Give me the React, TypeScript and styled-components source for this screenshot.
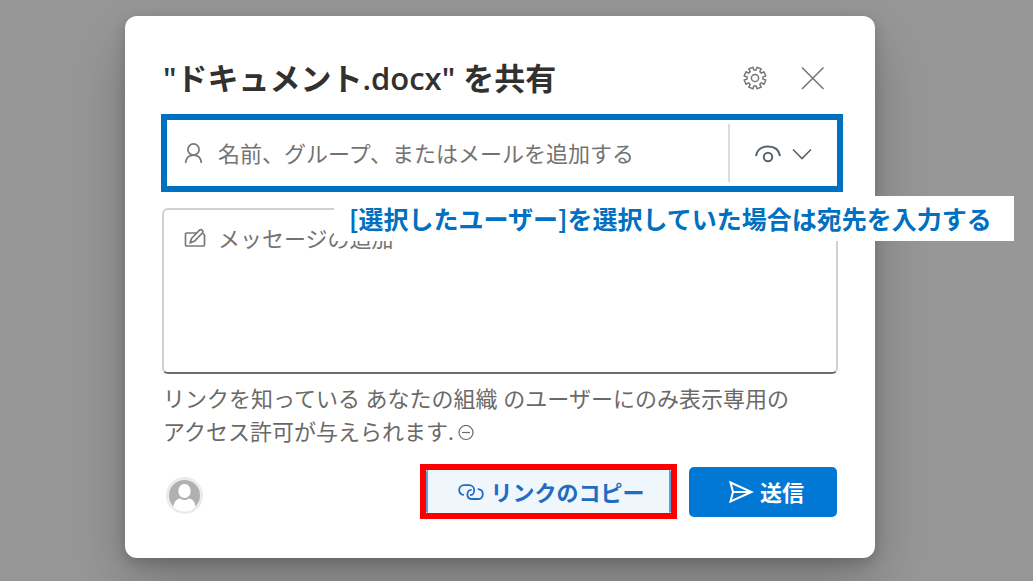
import React from "react";
import styled, { createGlobalStyle } from "styled-components";

const uiFont = `"Open Sans", "Noto Sans CJK JP", sans-serif`;
const jpFont = `"Noto Sans CJK JP", sans-serif`;

const GlobalStyle = createGlobalStyle`
  *, *::before, *::after { box-sizing: border-box; }
  body { margin: 0; background: #979797; font-family: ${uiFont}; }
  button, input, textarea { font: inherit; color: inherit; }
`;

const Page = styled.main`
  display: flex;
  min-height: 100vh;
  padding: 16px 158px 23px 125px;
  overflow: hidden;
`;

const Dialog = styled.section`
  flex: 1;
  min-width: 0;
  padding: 36px 38px 38px;
  border-radius: 12px;
  background: #fff;
  color: #6b6967;
  font-size: 22px;
  box-shadow: 0 26px 58px rgba(0, 0, 0, 0.22), 0 5px 14px rgba(0, 0, 0, 0.18);
`;

const Header = styled.header`
  display: flex;
  align-items: center;
  justify-content: space-between;
  height: 52px;
  margin-bottom: 10px;
`;

const Title = styled.h1`
  margin: 0;
  color: #323130;
  font-size: 31px;
  line-height: 52px;
  font-weight: 700;
  white-space: nowrap;
`;

const Latin = styled.span`
  font-weight: 600;
`;

const HeaderActions = styled.div`
  display: flex;
  gap: 26px;
  padding-right: 8px;
`;

const IconButton = styled.button`
  display: flex;
  align-items: center;
  justify-content: center;
  width: 32px;
  height: 32px;
  padding: 0;
  border: 0;
  background: none;
  color: #7a7876;
`;

const Recipients = styled.div`
  position: relative;
  display: flex;
  align-items: center;
  height: 78px;
  margin: 0 -6px 16px -2px;
  padding-left: 15px;
  border: 6px solid #0070c0;
`;

const TextInput = styled.input`
  flex: 1;
  min-width: 0;
  height: 50px;
  padding: 0 0 0 12px;
  border: 0;
  outline: 0;
  background: none;
  &::placeholder { color: #757371; opacity: 1; }
`;

const Permission = styled.button`
  display: flex;
  align-items: center;
  gap: 10px;
  height: 58px;
  padding: 0 25px 0 24px;
  border: 0;
  border-left: 2px solid #dcdcdc;
  background: none;
  color: #59636e;
`;

const Callout = styled.p`
  position: absolute;
  top: 76px;
  left: 167px;
  margin: 0;
  padding: 0 22px 0 15px;
  background: #fff;
  color: #0070c0;
  font-family: ${jpFont};
  font-size: 25px;
  font-weight: 700;
  line-height: 45px;
  white-space: nowrap;
`;

const Message = styled.div`
  display: flex;
  align-items: flex-start;
  height: 166px;
  margin: 0 -1px;
  padding: 12px 18px 0 20px;
  border: 2px solid #d2d0ce;
  border-bottom-color: #6e6c6a;
  border-radius: 6px;
`;

const LineIcon = styled.label`
  display: flex;
  align-items: center;
  width: 24px;
  height: 32px;
  color: #7a7876;
`;

const TextArea = styled.textarea`
  flex: 1;
  height: 140px;
  padding: 0 0 0 10px;
  border: 0;
  outline: 0;
  resize: none;
  background: none;
  line-height: 32px;
  &::placeholder { color: #757371; opacity: 1; }
`;

const Notice = styled.p`
  margin: 8px 0 16px;
  line-height: 33px;
`;

const InfoIcon = styled.svg`
  margin-left: 4px;
  vertical-align: -1px;
`;

const Footer = styled.footer`
  display: flex;
  align-items: center;
  height: 55px;
`;

const Avatar = styled.svg`
  margin: 8px auto 0 3px;
`;

const CopyFrame = styled.div`
  width: 257px;
  height: 55px;
  margin-right: 12px;
  border: 6px solid #f00;
`;

const ActionButton = styled.button<{ $primary?: boolean }>`
  display: flex;
  align-items: center;
  justify-content: center;
  gap: 6px;
  width: ${(p) => (p.$primary ? "148px" : "100%")};
  height: ${(p) => (p.$primary ? "50px" : "100%")};
  padding: 0 0 2px 6px;
  border: solid #5a9fdc;
  border-width: ${(p) => (p.$primary ? "0" : "0 2px")};
  border-radius: ${(p) => (p.$primary ? 5 : 2)}px;
  background: ${(p) => (p.$primary ? "#0078d4" : "#eff6fc")};
  color: ${(p) => (p.$primary ? "#fff" : "#1f6cc0")};
  font-family: ${jpFont};
  font-weight: 700;
  white-space: nowrap;
`;

const teeth = 8;
const gearPath =
  Array.from({ length: teeth }, (_, i) => {
    const base = (i * 2 * Math.PI) / teeth + Math.PI / 8;
    return [
      [-0.25, 8],
      [-0.21, 11],
      [0.21, 11],
      [0.25, 8],
    ]
      .map(([a, r], j) => {
        const x = (12 + r * Math.cos(base + a)).toFixed(2);
        const y = (12 + r * Math.sin(base + a)).toFixed(2);
        return `${i === 0 && j === 0 ? "M" : "L"}${x} ${y}`;
      })
      .join("");
  }).join("") + "Z";

const stroke = {
  fill: "none",
  stroke: "currentColor",
  "aria-hidden": true,
} as const;

export default function App() {
  return (
    <>
      <GlobalStyle />
      <Page>
        <Dialog role="dialog" aria-labelledby="share-title">
          <Header>
            <Title id="share-title">
              <Latin>"</Latin>ドキュメント<Latin>.docx"</Latin> を共有
            </Title>
            <HeaderActions>
              <IconButton type="button" aria-label="設定">
                <svg width="24" height="24" viewBox="0 0 24 24" {...stroke} strokeWidth="1.5" strokeLinejoin="round">
                  <path d={gearPath} />
                  <circle cx="12" cy="12" r="3.6" />
                </svg>
              </IconButton>
              <IconButton type="button" aria-label="閉じる">
                <svg width="24" height="24" viewBox="0 0 24 24" {...stroke} strokeWidth="1.6">
                  <path d="M1 1.500L22.500 23M22.500 1.500L1 23" />
                </svg>
              </IconButton>
            </HeaderActions>
          </Header>

          <Recipients>
            <LineIcon htmlFor="recipients" aria-label="宛先">
              <svg width="24" height="24" viewBox="0 0 24 24" {...stroke} strokeWidth="1.7">
                <circle cx="11.5" cy="8.5" r="5.6" />
                <path d="M3.600 22C4 17 7 14.100 11.500 14.100S19 17 19.400 22" />
              </svg>
            </LineIcon>
            <TextInput id="recipients" placeholder="名前、グループ、またはメールを追加する" />
            <Permission type="button" aria-label="表示のみ">
              <svg width="28" height="20" viewBox="0 0 28 20" {...stroke} strokeWidth="2">
                <path d="M2 13C3 6.500 8 3.500 14 3.500S25 6.500 26 13" />
                <circle cx="14" cy="14" r="4.200" />
              </svg>
              <svg width="20" height="14" viewBox="0 0 20 14" {...stroke} strokeWidth="1.6">
                <path d="M1 3.500L10 12.500L19 3.500" />
              </svg>
            </Permission>
            <Callout>[選択したユーザー]を選択していた場合は宛先を入力する</Callout>
          </Recipients>

          <Message>
            <LineIcon htmlFor="message" aria-label="メッセージ">
              <svg width="24" height="20" viewBox="0 0 24 20" {...stroke} strokeWidth="1.7" strokeLinejoin="round">
                <path d="M13 5H2.500Q1.500 5 1.500 6V17Q1.500 18 2.500 18H19.500Q20.500 18 20.500 17V7L18.500 5" />
                <path d="M6 15L7.500 10.500L15.500 2.200Q17 1 18.300 2.300T18.300 5L10.300 13.300Z" />
              </svg>
            </LineIcon>
            <TextArea id="message" placeholder="メッセージの追加" />
          </Message>

          <Notice>
            リンクを知っている あなたの組織 のユーザーにのみ表示専用の
            <br />
            アクセス許可が与えられます.
            <InfoIcon width="16" height="16" viewBox="0 0 16 16" {...stroke} strokeWidth="1.2">
              <circle cx="8" cy="7.500" r="7" />
              <path d="M4 7.500H12" />
            </InfoIcon>
          </Notice>

          <Footer>
            <Avatar width="37" height="37" viewBox="0 0 37 37" role="img" aria-label="ユーザー">
              <circle cx="18.500" cy="18.500" r="17" fill="#b0b0b0" stroke="#edebe9" strokeWidth="3" />
              <ellipse cx="18.500" cy="14" rx="6.200" ry="7" fill="#fff" />
              <path d="M7.500 30C8 24.500 10.500 22 14 21.500Q18.500 24.500 23 21.500C26.500 22 29 24.500 29.500 30Q25 34.500 18.500 34.500T7.500 30Z" fill="#fff" />
            </Avatar>
            <CopyFrame>
              <ActionButton type="button">
                <svg width="26" height="18" viewBox="0 0 26 18" {...stroke} strokeWidth="1.8" strokeLinecap="round">
                  <path d="M5.200 12.800C2.600 12.300 1.200 10.400 1.200 8C1.200 5.200 3.200 3.200 6 3.200H11C14 3.200 16.200 5.400 16.200 8.200C16.200 11 14.600 13 12.800 13" />
                  <path d="M20.500 7.200C23.200 7.600 24.800 9.800 24.800 12.200C24.800 15.200 22.600 17 20 17H14.500C11.400 17 9.400 15.200 9.400 12.400C9.400 9.600 11.200 7.800 13 7.800" />
                </svg>
                リンクのコピー
              </ActionButton>
            </CopyFrame>
            <ActionButton type="button" $primary>
              <svg width="26" height="24" viewBox="0 0 26 24" {...stroke} strokeWidth="2" strokeLinejoin="miter">
                <path d="M2.500 3.500L23.500 13L2.500 22.500L5 13ZM5 13H22" />
              </svg>
              送信
            </ActionButton>
          </Footer>
        </Dialog>
      </Page>
    </>
  );
}
